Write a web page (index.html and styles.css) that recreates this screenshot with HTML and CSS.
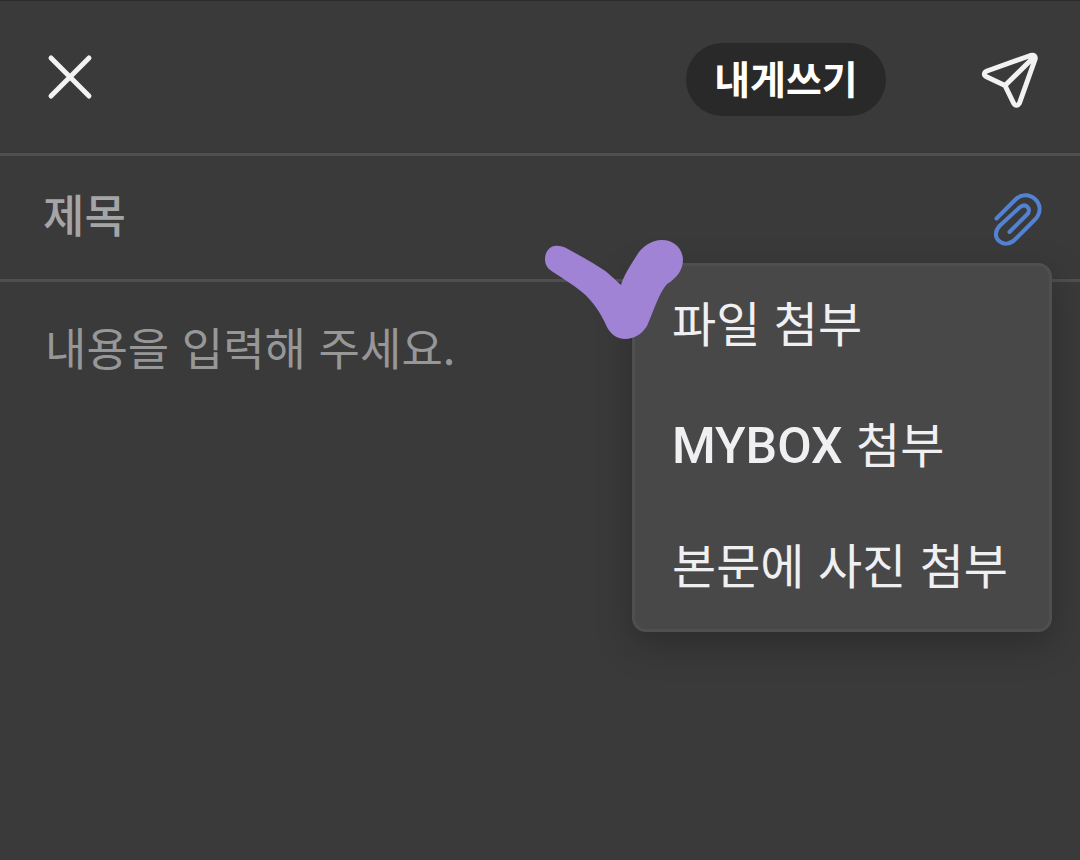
FILE: index.html
```html
<!DOCTYPE html>
<html lang="ko">

<head>
    <meta charset="UTF-8">
    <meta name="viewport" content="width=device-width, initial-scale=1.0">
    <title>내게쓰기</title>
    <link rel="stylesheet" href="styles.css">
</head>

<body>
    <form class="write">
        <!-- top bar -->
        <header class="bar">
            <button type="button" class="icon-btn" aria-label="닫기">
                <svg width="52" height="52" viewBox="0 0 52 52">
                    <path class="line-white" d="M7 7L45 45M45 7L7 45" />
                </svg>
            </button>
            <button type="button" class="to-me">내게쓰기</button>
            <button type="submit" class="icon-btn" aria-label="보내기">
                <svg width="64" height="64" viewBox="0 0 64 64">
                    <path class="line-white" d="M54.500 10.500L11 26C7.500 27.500 7.500 30.500 11 32L29 40.500L37.500 58C39 61 42 61 43.500 58L59 14.500C60 11 58 9.500 54.500 10.500ZM29 40.500L57 13" />
                </svg>
            </button>
        </header>

        <!-- subject + attach -->
        <div class="subject">
            <input type="text" class="subject-input" placeholder="제목" aria-label="제목">
            <button type="button" class="icon-btn" aria-label="첨부">
                <svg width="56" height="60" viewBox="0 0 56 60">
                    <path class="line-blue" d="M8.500 30.500L27.500 11.500C33 6 41.500 5.500 47.500 11.500C53 17 53 25 47.500 31L27 51.500C22 56.500 15.500 57 11 53C6.500 49 7 42.500 12 37.500L31.500 19.500C34.500 17 37.500 17 39.500 19C41.500 21 41.500 24 39 26.500L21.500 44" />
                </svg>
            </button>

            <div class="menu">
                <button type="button">파일 첨부</button>
                <button type="button"><span class="brand">MYBOX</span> 첨부</button>
                <button type="button">본문에 사진 첨부</button>
            </div>

            <!-- check mark over the menu corner -->
            <svg class="check" width="142" height="104" viewBox="0 0 142 104">
                <path d="M16 7C8 5 2 12 2 20C2 26 5 30 10 33C19 39 29 45 39 53C50 62 58 75 63 86C67 95 74 100 82 100C91 100 99 95 104 87C111 71 116 54 124 45C134 39 140 31 140 20C139 8 130 1 119 1C108 1 99 8 94 16C87 27 81 36 78 46C71 40 65 33 56 28C45 21 32 14 23 9C21 8 19 7 16 7Z" />
            </svg>
        </div>

        <textarea class="content" placeholder="내용을 입력해 주세요." aria-label="내용"></textarea>
    </form>
</body>

</html>
```
FILE: styles.css
```css
* {
    margin: 0;
    padding: 0;
    box-sizing: border-box;
}

body {
    background-color: #3a3a3b;
    font-family: "Noto Sans CJK KR", sans-serif;
    font-weight: 400;
}

button,
input,
textarea {
    font: inherit;
    color: #f0eff2;
    background: none;
    border: none;
    outline: none;
}

button {
    cursor: pointer;
}

svg {
    display: block;
    fill: none;
}

.write {
    display: flex;
    flex-direction: column;
    min-height: 100vh;
    border-top: 1px solid #2c2c2d;
}

.bar {
    display: flex;
    align-items: center;
    height: 155px;
    padding: 4px 40px 0 44px;
    border-bottom: 3px solid #4f4f4f;
}

.bar .icon-btn {
    padding-bottom: 4px;
}

.to-me {
    width: 200px;
    height: 73px;
    margin-left: auto;
    margin-right: 90px;
    padding-bottom: 4px;
    border-radius: 37px;
    background-color: #29292a;
    color: #fff;
    font-size: 39px;
    font-weight: 700;
    line-height: 56px;
}

.line-white {
    stroke: #f2f2f2;
    stroke-width: 5px;
    stroke-linecap: round;
    stroke-linejoin: round;
}

.line-blue {
    stroke: #5482d2;
    stroke-width: 4px;
    stroke-linecap: round;
    stroke-linejoin: round;
}

.subject {
    position: relative;
    display: flex;
    align-items: center;
    height: 126px;
    padding: 0 36px 0 43px;
    border-bottom: 3px solid #4f4f4f;
}

.subject-input {
    flex: 1;
    min-width: 0;
    height: 74px;
    padding-bottom: 8px;
    font-size: 45px;
    font-weight: 500;
}

.subject-input::placeholder {
    color: #a5a5a6;
}

.content::placeholder {
    color: #979798;
}

.menu {
    position: absolute;
    top: 107px;
    right: 28px;
    display: flex;
    flex-direction: column;
    width: 420px;
    border: 3px solid #4f4f50;
    border-radius: 14px;
    background-color: #484849;
    box-shadow: 0 12px 36px rgba(0, 0, 0, 0.25);
}

.menu button {
    height: 121px;
    padding: 0 37px 12px;
    font-size: 48px;
    line-height: 72px;
    text-align: left;
    white-space: nowrap;
}

.brand {
    font-family: Roboto, sans-serif;
    font-size: 50px;
    font-weight: 500;
    line-height: 1;
}

.check {
    position: absolute;
    top: 83px;
    right: 395px;
    fill: #a183d5;
}

.content {
    flex: 1;
    padding: 32px 45px;
    font-size: 45px;
    line-height: 66px;
    resize: none;
}
```
